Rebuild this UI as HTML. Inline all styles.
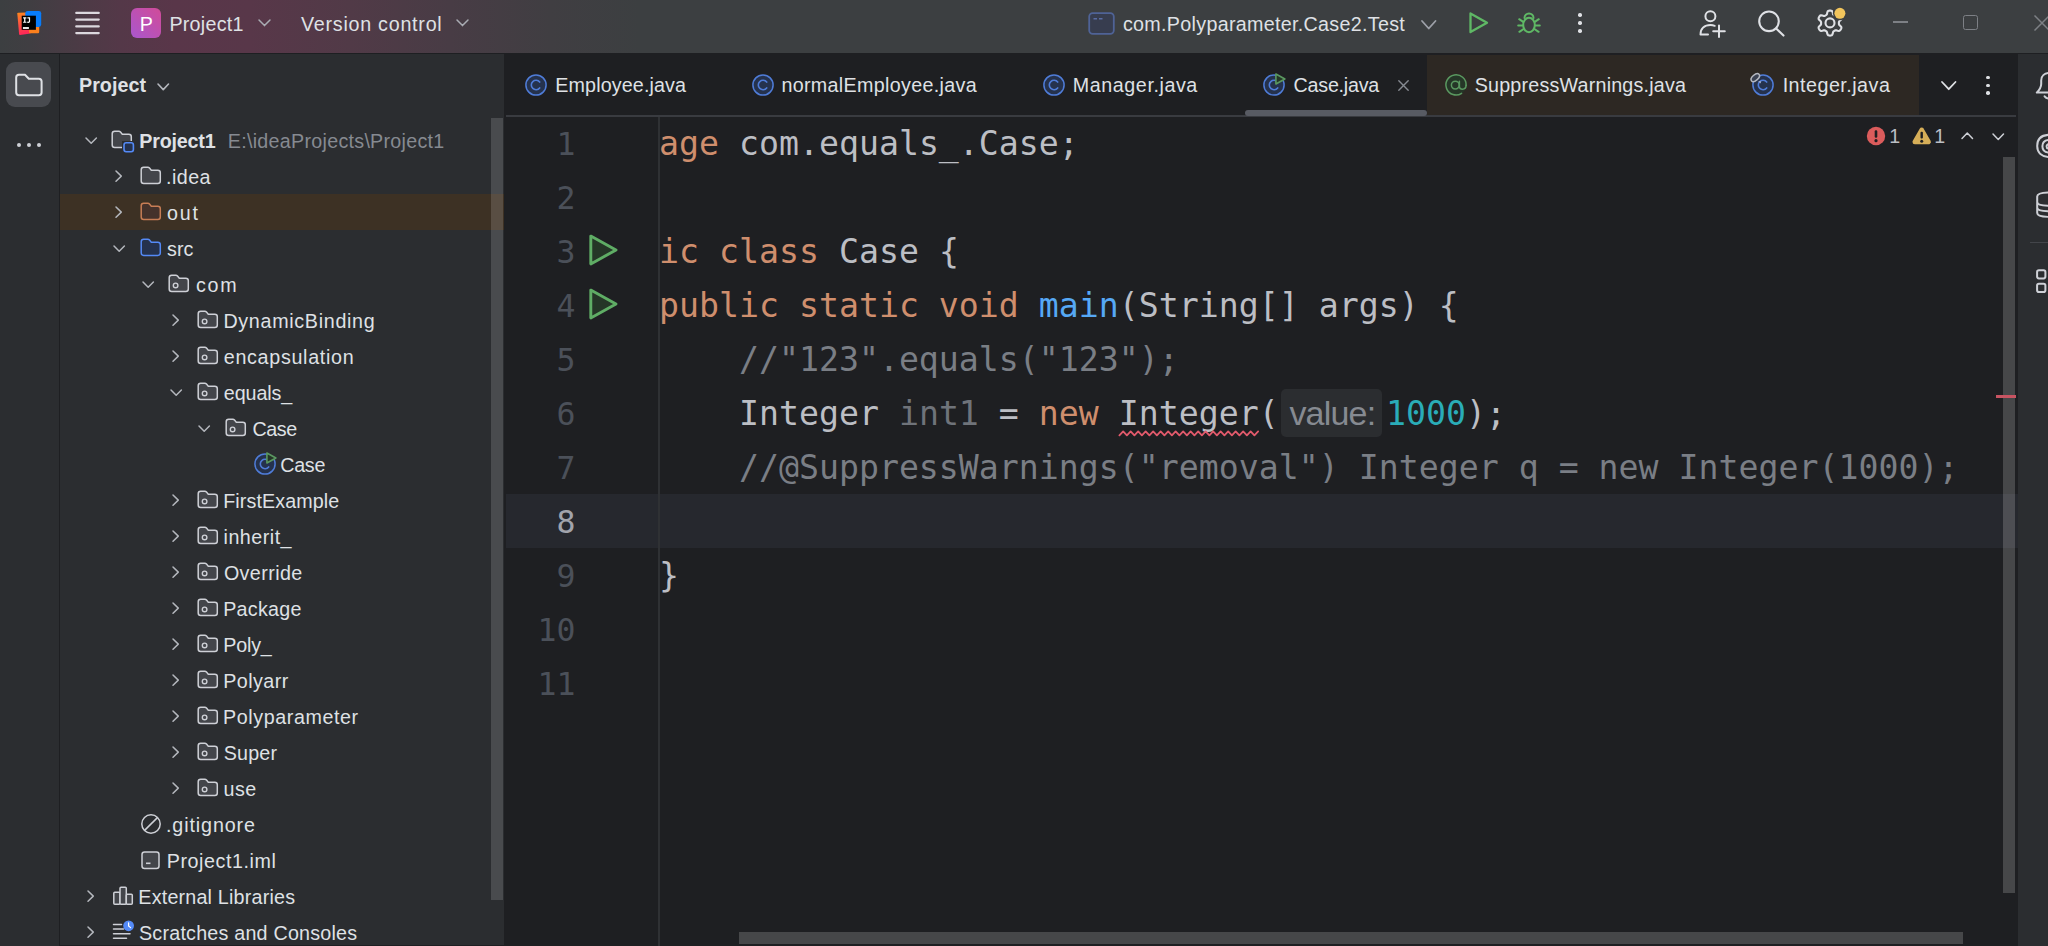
<!DOCTYPE html>
<html lang="en"><head><meta charset="utf-8"><title>Project1 - Case.java</title>
<style>
html,body{margin:0;padding:0;background:#1e1f22;}
body{width:2048px;height:946px;position:relative;overflow:hidden;font-family:"Liberation Sans","Noto Sans CJK SC",sans-serif;}
.t{position:absolute;white-space:pre;display:block;}
.s{font-family:"Liberation Sans","Noto Sans CJK SC",sans-serif;}
.m{font-family:"DejaVu Sans Mono","Liberation Mono",monospace;}
.i{position:absolute;display:block;overflow:visible;}
.b{position:absolute;}
</style></head><body>
<div class="b" style="left:0;top:0;width:2048px;height:53px;background:linear-gradient(90deg,#3c3f41 0px,#403e42 30px,#473c44 60px,#4e3a46 90px,#543848 120px,#593649 175px,#583749 250px,#513a47 350px,#483c45 450px,#403e42 550px,#3c3f41 640px);"></div>
<div class="b" style="left:0px;top:53px;width:2048px;height:1px;background:#1e1f22;"></div>
<svg class="i" style="left:17px;top:10px" width="26" height="27" viewBox="0 0 26 27" ><defs><linearGradient id="lgA" x1="0" y1="0" x2="0.150" y2="1"><stop offset="0" stop-color="#fc8a1c"/><stop offset="0.450" stop-color="#fd5a3c"/><stop offset="1" stop-color="#fe2857"/></linearGradient></defs>
<path d="M0.300 3.600 Q0.300 2.800 1.200 2.700 L9 2.400 L13.500 23.600 L3 25 Q2.200 25 2.100 24.200 Z" fill="url(#lgA)"/>
<rect x="12" y="13" width="10.200" height="10.200" rx="1.200" fill="#fc801d"/>
<rect x="8.300" y="0.900" width="15.900" height="16.100" rx="2.400" fill="#087cfa"/>
<rect x="4.700" y="5.700" width="14.200" height="14.100" fill="#000"/>
<rect x="5.900" y="17.100" width="6" height="1.800" fill="#fff"/>
<path d="M6.100 7.300h3.300v1.100h-1v3.300h1v1.100h-3.300v-1.100h1v-3.300h-1z M10.400 7.300h2.700v3.900c0 1.200-.7 1.700-1.700 1.700-.7 0-1.200-.3-1.600-.7l.8-.8c.2.200.4.400.7.400.4 0 .6-.2.600-.7v-2.700h-1.500z" fill="#fff"/></svg>
<svg class="i" style="left:73px;top:10px" width="30" height="26" viewBox="0 0 30 26" ><path d="M3.300 2.900 H25.700 M3.300 9.600 H25.700 M3.300 16.400 H25.700 M3.300 23.100 H25.700" stroke="#dcd8de" stroke-width="2.300" stroke-linecap="round" fill="none"/></svg>
<div class="b" style="left:131px;top:8px;width:30px;height:30px;border-radius:6px;background:linear-gradient(45deg,#a957cd 0%,#d14b98 100%);"></div>
<span class="t s" style="left:139.72px;top:4.97px;font-size:19.7px;line-height:39.4px;height:39.4px;color:#ffffff;letter-spacing:0.000px;">P</span>
<span class="t s" style="left:169.42px;top:4.97px;font-size:19.7px;line-height:39.4px;height:39.4px;color:#dfe1e5;letter-spacing:0.252px;">Project1</span>
<svg class="i" style="left:256.9px;top:18.4px" width="15" height="9.6" viewBox="0 0 15 9.6" ><path d="M2 2 L7.5 7.6 L13 2" fill="none" stroke="#a9acb3" stroke-width="1.5" stroke-linecap="round" stroke-linejoin="round"/></svg>
<span class="t s" style="left:301.00px;top:4.97px;font-size:19.7px;line-height:39.4px;height:39.4px;color:#dfe1e5;letter-spacing:0.748px;">Version control</span>
<svg class="i" style="left:454.9px;top:18.4px" width="15" height="9.6" viewBox="0 0 15 9.6" ><path d="M2 2 L7.5 7.6 L13 2" fill="none" stroke="#a9acb3" stroke-width="1.5" stroke-linecap="round" stroke-linejoin="round"/></svg>
<svg class="i" style="left:1088px;top:11.5px" width="27" height="23" viewBox="0 0 27 23" ><rect x="1.200" y="1.200" width="24.600" height="20.600" rx="3.500" fill="#373d4f" stroke="#4f6396" stroke-width="1.800"/><rect x="5.500" y="6" width="3.500" height="1.500" fill="#5a6da3"/><rect x="11" y="6" width="3.500" height="1.500" fill="#5a6da3"/></svg>
<span class="t s" style="left:1122.96px;top:4.97px;font-size:19.7px;line-height:39.4px;height:39.4px;color:#dfe1e5;letter-spacing:0.308px;">com.Polyparameter.Case2.Test</span>
<svg class="i" style="left:1419.85px;top:19.05px" width="17.5" height="11.5" viewBox="0 0 17.5 11.5" ><path d="M2 2 L8.75 9.5 L15.5 2" fill="none" stroke="#9da0a8" stroke-width="1.8" stroke-linecap="round" stroke-linejoin="round"/></svg>
<svg class="i" style="left:1467px;top:10.2px" width="24" height="26" viewBox="0 0 24 26" ><path d="M3.500 3.500 L20 12.800 L3.500 22.100 Z" fill="none" stroke="#5fb865" stroke-width="2.300" stroke-linejoin="round"/></svg>
<svg class="i" style="left:1516px;top:10px" width="26" height="26" viewBox="0 0 26 26" ><g fill="none" stroke="#5fb865" stroke-width="2" stroke-linecap="round">
<ellipse cx="13" cy="15" rx="5.800" ry="7.200"/>
<path d="M8.500 8 a4.500 4.500 0 0 1 9 0"/>
<path d="M7.200 11.800 L3.200 9.200 M18.800 11.800 L22.800 9.200 M7 15.500 H2.200 M19 15.500 H23.800 M7.600 19 L3.400 21.800 M18.400 19 L22.600 21.800"/></g></svg>
<div class="b" style="left:1578.3px;top:13.3px;width:3.4px;height:3.4px;border-radius:50%;background:#dfe1e5"></div>
<div class="b" style="left:1578.3px;top:21.400000000000002px;width:3.4px;height:3.4px;border-radius:50%;background:#dfe1e5"></div>
<div class="b" style="left:1578.3px;top:29.3px;width:3.4px;height:3.4px;border-radius:50%;background:#dfe1e5"></div>
<svg class="i" style="left:1697px;top:8px" width="30" height="31" viewBox="0 0 30 31" ><g fill="none" stroke="#dfe1e5" stroke-width="2" stroke-linecap="round">
<circle cx="13.400" cy="8.200" r="5"/><path d="M3.500 26.500 c0-6 4-9.500 10-9.500 c1.500 0 3 .3 4.200 .8 M3.500 26.500 H11"/>
<path d="M22 17.500 V29 M16.200 23.300 H27.800"/></g></svg>
<svg class="i" style="left:1756px;top:9px" width="30" height="30" viewBox="0 0 30 30" ><g fill="none" stroke="#dfe1e5" stroke-width="2.100" stroke-linecap="round"><circle cx="13" cy="12.300" r="9.800"/><path d="M20.200 19.500 L27.500 26.600"/></g></svg>
<svg class="i" style="left:1815.3px;top:8px" width="30" height="30" viewBox="0 0 30 30" ><g fill="none" stroke="#dfe1e5" stroke-width="2.100" stroke-linejoin="round"><path d="M15.00 2.60 L15.82 2.65 L16.61 2.85 L17.32 3.43 L17.77 4.76 L18.05 6.11 L18.46 6.75 L18.95 7.10 L19.45 7.39 L19.96 7.68 L20.50 7.93 L21.26 7.96 L22.57 7.53 L23.95 7.25 L24.80 7.58 L25.37 8.17 L25.83 8.85 L26.19 9.58 L26.42 10.37 L26.27 11.27 L25.34 12.33 L24.31 13.25 L23.96 13.92 L23.90 14.52 L23.90 15.10 L23.90 15.68 L23.96 16.28 L24.31 16.95 L25.34 17.87 L26.27 18.93 L26.42 19.83 L26.19 20.62 L25.83 21.35 L25.37 22.03 L24.80 22.62 L23.95 22.95 L22.57 22.67 L21.26 22.24 L20.50 22.27 L19.96 22.52 L19.45 22.81 L18.95 23.10 L18.46 23.45 L18.05 24.09 L17.77 25.44 L17.32 26.77 L16.61 27.35 L15.82 27.55 L15.00 27.60 L14.18 27.55 L13.39 27.35 L12.68 26.77 L12.23 25.44 L11.95 24.09 L11.54 23.45 L11.05 23.10 L10.55 22.81 L10.04 22.52 L9.50 22.27 L8.74 22.24 L7.43 22.67 L6.05 22.95 L5.20 22.62 L4.63 22.03 L4.17 21.35 L3.81 20.62 L3.58 19.83 L3.73 18.93 L4.66 17.87 L5.69 16.95 L6.04 16.28 L6.10 15.68 L6.10 15.10 L6.10 14.52 L6.04 13.92 L5.69 13.25 L4.66 12.33 L3.73 11.27 L3.58 10.37 L3.81 9.58 L4.17 8.85 L4.63 8.17 L5.20 7.58 L6.05 7.25 L7.43 7.53 L8.74 7.96 L9.50 7.93 L10.04 7.68 L10.55 7.39 L11.05 7.10 L11.54 6.75 L11.95 6.11 L12.23 4.76 L12.68 3.43 L13.39 2.85 L14.18 2.65 Z"/><circle cx="15" cy="14.900" r="4.500"/></g><circle cx="24.900" cy="5.300" r="7" fill="#3c3f41"/><circle cx="24.900" cy="5.300" r="5.500" fill="#f2c55c"/></svg>
<div class="b" style="left:1893px;top:21.2px;width:15px;height:1.5px;background:#7d8085;"></div>
<div class="b" style="left:1963px;top:15px;width:12.500px;height:12.500px;border:1.500px solid #7d8085;border-radius:2.500px"></div>
<svg class="i" style="left:2033px;top:14px" width="18" height="18" viewBox="0 0 18 18" ><path d="M1.500 1.500 L16.500 16.500 M16.500 1.500 L1.500 16.500" stroke="#7d8085" stroke-width="1.500" fill="none"/></svg>
<div class="b" style="left:0px;top:54px;width:60px;height:892px;background:#2b2d30;"></div>
<div class="b" style="left:59px;top:54px;width:1px;height:892px;background:#1e1f22;"></div>
<div class="b" style="left:6px;top:62px;width:45px;height:45px;border-radius:9px;background:#484a4f"></div>
<svg class="i" style="left:14px;top:72px" width="30" height="26" viewBox="0 0 30 26" ><path d="M2.200 5.500 Q2.200 2.800 5 2.800 H11 L14.800 6.800 H24.800 Q27.600 6.800 27.600 9.600 V20.600 Q27.600 23.300 24.800 23.300 H5 Q2.200 23.300 2.200 20.600 Z" fill="none" stroke="#dfe1e5" stroke-width="2" stroke-linejoin="round"/></svg>
<div class="b" style="left:16.7px;top:142.7px;width:4px;height:4px;border-radius:50%;background:#ced0d6"></div>
<div class="b" style="left:27px;top:142.7px;width:4px;height:4px;border-radius:50%;background:#ced0d6"></div>
<div class="b" style="left:37.2px;top:142.7px;width:4px;height:4px;border-radius:50%;background:#ced0d6"></div>
<div class="b" style="left:60px;top:54px;width:444px;height:892px;background:#2b2d30;"></div>
<span class="t s" style="left:79.02px;top:65.97px;font-size:19.7px;line-height:39.4px;height:39.4px;color:#dfe1e5;letter-spacing:0.032px;font-weight:700;">Project</span>
<svg class="i" style="left:155.75px;top:81.5px" width="14.5" height="9.6" viewBox="0 0 14.5 9.6" ><path d="M2 2 L7.25 7.6 L12.5 2" fill="none" stroke="#b4b7bd" stroke-width="1.6" stroke-linecap="round" stroke-linejoin="round"/></svg>
<div class="b" style="left:60px;top:194px;width:444px;height:36px;background:#3d3124;"></div>
<svg class="i" style="left:83.8px;top:135.65px" width="14.4" height="9.3" viewBox="0 0 14.4 9.3" ><path d="M2 2 L7.2 7.3 L12.4 2" fill="none" stroke="#b4b7bd" stroke-width="1.5" stroke-linecap="round" stroke-linejoin="round"/></svg>
<svg class="i" style="left:111.0px;top:130.4px" width="22" height="19" viewBox="0 0 22 19" ><path d="M1.200 3.800 Q1.200 1.300 3.700 1.300 H7.800 Q8.800 1.300 9.500 2.100 L11.300 4.200 H17.800 Q20.300 4.200 20.300 6.700 V14.900 Q20.300 17.400 17.800 17.400 H3.700 Q1.200 17.400 1.200 14.900 Z" fill="#43454a" stroke="#ced0d6" stroke-width="1.500" stroke-linejoin="round"/></svg>
<svg class="i" style="left:122.0px;top:141px" width="14" height="13" viewBox="0 0 14 13" ><rect x="0" y="0" width="13.500" height="12.500" fill="#2b2d30"/><rect x="2" y="1.800" width="9.400" height="9" rx="2.200" fill="#25324d" stroke="#548af7" stroke-width="1.600"/></svg>
<span class="t s" style="left:139.32px;top:121.97px;font-size:19.7px;line-height:39.4px;height:39.4px;color:#dfe1e5;letter-spacing:-0.192px;font-weight:700;">Project1</span>
<svg class="i" style="left:114.14999999999999px;top:169.1px" width="9.3" height="14.2" viewBox="0 0 9.3 14.2" ><path d="M2 2 L7.3 7.1 L2 12.2" fill="none" stroke="#b4b7bd" stroke-width="1.5" stroke-linecap="round" stroke-linejoin="round"/></svg>
<svg class="i" style="left:139.75px;top:166.4px" width="22" height="19" viewBox="0 0 22 19" ><path d="M1.200 3.800 Q1.200 1.300 3.700 1.300 H7.800 Q8.800 1.300 9.500 2.100 L11.300 4.200 H17.800 Q20.300 4.200 20.300 6.700 V14.900 Q20.300 17.400 17.800 17.400 H3.700 Q1.200 17.400 1.200 14.900 Z" fill="#43454a" stroke="#ced0d6" stroke-width="1.500" stroke-linejoin="round"/></svg>
<span class="t s" style="left:165.98px;top:157.97px;font-size:19.7px;line-height:39.4px;height:39.4px;color:#dfe1e5;letter-spacing:0.468px;">.idea</span>
<svg class="i" style="left:114.14999999999999px;top:205.1px" width="9.3" height="14.2" viewBox="0 0 9.3 14.2" ><path d="M2 2 L7.3 7.1 L2 12.2" fill="none" stroke="#b4b7bd" stroke-width="1.5" stroke-linecap="round" stroke-linejoin="round"/></svg>
<svg class="i" style="left:139.75px;top:202.4px" width="22" height="19" viewBox="0 0 22 19" ><path d="M1.200 3.800 Q1.200 1.300 3.700 1.300 H7.800 Q8.800 1.300 9.500 2.100 L11.300 4.200 H17.800 Q20.300 4.200 20.300 6.700 V14.900 Q20.300 17.400 17.800 17.400 H3.700 Q1.200 17.400 1.200 14.900 Z" fill="#45322b" stroke="#c77d55" stroke-width="1.500" stroke-linejoin="round"/></svg>
<span class="t s" style="left:166.96px;top:193.97px;font-size:19.7px;line-height:39.4px;height:39.4px;color:#dfe1e5;letter-spacing:1.877px;">out</span>
<svg class="i" style="left:111.8px;top:243.65px" width="14.4" height="9.3" viewBox="0 0 14.4 9.3" ><path d="M2 2 L7.2 7.3 L12.4 2" fill="none" stroke="#b4b7bd" stroke-width="1.5" stroke-linecap="round" stroke-linejoin="round"/></svg>
<svg class="i" style="left:139.75px;top:238.4px" width="22" height="19" viewBox="0 0 22 19" ><path d="M1.200 3.800 Q1.200 1.300 3.700 1.300 H7.800 Q8.800 1.300 9.500 2.100 L11.300 4.200 H17.800 Q20.300 4.200 20.300 6.700 V14.900 Q20.300 17.400 17.800 17.400 H3.700 Q1.200 17.400 1.200 14.900 Z" fill="#25324d" stroke="#548af7" stroke-width="1.500" stroke-linejoin="round"/></svg>
<span class="t s" style="left:167.01px;top:229.97px;font-size:19.7px;line-height:39.4px;height:39.4px;color:#dfe1e5;letter-spacing:0.093px;">src</span>
<svg class="i" style="left:140.8px;top:279.65000000000003px" width="14.4" height="9.3" viewBox="0 0 14.4 9.3" ><path d="M2 2 L7.2 7.3 L12.4 2" fill="none" stroke="#b4b7bd" stroke-width="1.5" stroke-linecap="round" stroke-linejoin="round"/></svg>
<svg class="i" style="left:168.0px;top:274.4px" width="22" height="19" viewBox="0 0 22 19" ><path d="M1.200 3.800 Q1.200 1.300 3.700 1.300 H7.800 Q8.800 1.300 9.500 2.100 L11.300 4.200 H17.800 Q20.300 4.200 20.300 6.700 V14.900 Q20.300 17.400 17.800 17.400 H3.700 Q1.200 17.400 1.200 14.900 Z" fill="#43454a" stroke="#ced0d6" stroke-width="1.500" stroke-linejoin="round"/><circle cx="7.600" cy="11.400" r="2.300" fill="none" stroke="#ced0d6" stroke-width="1.400"/></svg>
<span class="t s" style="left:196.11px;top:265.97px;font-size:19.7px;line-height:39.4px;height:39.4px;color:#dfe1e5;letter-spacing:1.668px;">com</span>
<svg class="i" style="left:171.14999999999998px;top:313.09999999999997px" width="9.3" height="14.2" viewBox="0 0 9.3 14.2" ><path d="M2 2 L7.3 7.1 L2 12.2" fill="none" stroke="#b4b7bd" stroke-width="1.5" stroke-linecap="round" stroke-linejoin="round"/></svg>
<svg class="i" style="left:196.75px;top:310.4px" width="22" height="19" viewBox="0 0 22 19" ><path d="M1.200 3.800 Q1.200 1.300 3.700 1.300 H7.800 Q8.800 1.300 9.500 2.100 L11.300 4.200 H17.800 Q20.300 4.200 20.300 6.700 V14.900 Q20.300 17.400 17.800 17.400 H3.700 Q1.200 17.400 1.200 14.900 Z" fill="#43454a" stroke="#ced0d6" stroke-width="1.500" stroke-linejoin="round"/><circle cx="7.600" cy="11.400" r="2.300" fill="none" stroke="#ced0d6" stroke-width="1.400"/></svg>
<span class="t s" style="left:223.42px;top:301.97px;font-size:19.7px;line-height:39.4px;height:39.4px;color:#dfe1e5;letter-spacing:0.694px;">DynamicBinding</span>
<svg class="i" style="left:171.14999999999998px;top:349.09999999999997px" width="9.3" height="14.2" viewBox="0 0 9.3 14.2" ><path d="M2 2 L7.3 7.1 L2 12.2" fill="none" stroke="#b4b7bd" stroke-width="1.5" stroke-linecap="round" stroke-linejoin="round"/></svg>
<svg class="i" style="left:196.75px;top:346.4px" width="22" height="19" viewBox="0 0 22 19" ><path d="M1.200 3.800 Q1.200 1.300 3.700 1.300 H7.800 Q8.800 1.300 9.500 2.100 L11.300 4.200 H17.800 Q20.300 4.200 20.300 6.700 V14.900 Q20.300 17.400 17.800 17.400 H3.700 Q1.200 17.400 1.200 14.900 Z" fill="#43454a" stroke="#ced0d6" stroke-width="1.500" stroke-linejoin="round"/><circle cx="7.600" cy="11.400" r="2.300" fill="none" stroke="#ced0d6" stroke-width="1.400"/></svg>
<span class="t s" style="left:223.81px;top:337.97px;font-size:19.7px;line-height:39.4px;height:39.4px;color:#dfe1e5;letter-spacing:0.693px;">encapsulation</span>
<svg class="i" style="left:168.8px;top:387.65000000000003px" width="14.4" height="9.3" viewBox="0 0 14.4 9.3" ><path d="M2 2 L7.2 7.3 L12.4 2" fill="none" stroke="#b4b7bd" stroke-width="1.5" stroke-linecap="round" stroke-linejoin="round"/></svg>
<svg class="i" style="left:196.75px;top:382.4px" width="22" height="19" viewBox="0 0 22 19" ><path d="M1.200 3.800 Q1.200 1.300 3.700 1.300 H7.800 Q8.800 1.300 9.500 2.100 L11.300 4.200 H17.800 Q20.300 4.200 20.300 6.700 V14.900 Q20.300 17.400 17.800 17.400 H3.700 Q1.200 17.400 1.200 14.900 Z" fill="#43454a" stroke="#ced0d6" stroke-width="1.500" stroke-linejoin="round"/><circle cx="7.600" cy="11.400" r="2.300" fill="none" stroke="#ced0d6" stroke-width="1.400"/></svg>
<span class="t s" style="left:223.81px;top:373.97px;font-size:19.7px;line-height:39.4px;height:39.4px;color:#dfe1e5;letter-spacing:-0.076px;">equals_</span>
<svg class="i" style="left:197.3px;top:423.65000000000003px" width="14.4" height="9.3" viewBox="0 0 14.4 9.3" ><path d="M2 2 L7.2 7.3 L12.4 2" fill="none" stroke="#b4b7bd" stroke-width="1.5" stroke-linecap="round" stroke-linejoin="round"/></svg>
<svg class="i" style="left:225.0px;top:418.4px" width="22" height="19" viewBox="0 0 22 19" ><path d="M1.200 3.800 Q1.200 1.300 3.700 1.300 H7.800 Q8.800 1.300 9.500 2.100 L11.300 4.200 H17.800 Q20.300 4.200 20.300 6.700 V14.900 Q20.300 17.400 17.800 17.400 H3.700 Q1.200 17.400 1.200 14.900 Z" fill="#43454a" stroke="#ced0d6" stroke-width="1.500" stroke-linejoin="round"/><circle cx="7.600" cy="11.400" r="2.300" fill="none" stroke="#ced0d6" stroke-width="1.400"/></svg>
<span class="t s" style="left:252.51px;top:409.97px;font-size:19.7px;line-height:39.4px;height:39.4px;color:#dfe1e5;letter-spacing:-0.409px;">Case</span>
<svg class="i" style="left:250.0px;top:449.1px" width="30" height="30" viewBox="0 0 30 30" ><circle cx="15" cy="15" r="10.100" fill="#25324d" stroke="#4f7cd8" stroke-width="1.500"/><path d="M18.700 12.100 A4.700 4.700 0 1 0 18.700 17.900" fill="none" stroke="#4f7cd8" stroke-width="1.600" stroke-linecap="round"/><path d="M16.900 4 L16.900 14 L25.900 9 Z" fill="#253627" stroke="#5a9860" stroke-width="1.600" stroke-linejoin="round"/></svg>
<span class="t s" style="left:280.21px;top:445.97px;font-size:19.7px;line-height:39.4px;height:39.4px;color:#dfe1e5;letter-spacing:-0.275px;">Case</span>
<svg class="i" style="left:171.14999999999998px;top:493.09999999999997px" width="9.3" height="14.2" viewBox="0 0 9.3 14.2" ><path d="M2 2 L7.3 7.1 L2 12.2" fill="none" stroke="#b4b7bd" stroke-width="1.5" stroke-linecap="round" stroke-linejoin="round"/></svg>
<svg class="i" style="left:196.75px;top:490.4px" width="22" height="19" viewBox="0 0 22 19" ><path d="M1.200 3.800 Q1.200 1.300 3.700 1.300 H7.800 Q8.800 1.300 9.500 2.100 L11.300 4.200 H17.800 Q20.300 4.200 20.300 6.700 V14.900 Q20.300 17.400 17.800 17.400 H3.700 Q1.200 17.400 1.200 14.900 Z" fill="#43454a" stroke="#ced0d6" stroke-width="1.500" stroke-linejoin="round"/><circle cx="7.600" cy="11.400" r="2.300" fill="none" stroke="#ced0d6" stroke-width="1.400"/></svg>
<span class="t s" style="left:223.22px;top:481.97px;font-size:19.7px;line-height:39.4px;height:39.4px;color:#dfe1e5;letter-spacing:0.110px;">FirstExample</span>
<svg class="i" style="left:171.14999999999998px;top:529.1px" width="9.3" height="14.2" viewBox="0 0 9.3 14.2" ><path d="M2 2 L7.3 7.1 L2 12.2" fill="none" stroke="#b4b7bd" stroke-width="1.5" stroke-linecap="round" stroke-linejoin="round"/></svg>
<svg class="i" style="left:196.75px;top:526.4px" width="22" height="19" viewBox="0 0 22 19" ><path d="M1.200 3.800 Q1.200 1.300 3.700 1.300 H7.800 Q8.800 1.300 9.500 2.100 L11.300 4.200 H17.800 Q20.300 4.200 20.300 6.700 V14.900 Q20.300 17.400 17.800 17.400 H3.700 Q1.200 17.400 1.200 14.900 Z" fill="#43454a" stroke="#ced0d6" stroke-width="1.500" stroke-linejoin="round"/><circle cx="7.600" cy="11.400" r="2.300" fill="none" stroke="#ced0d6" stroke-width="1.400"/></svg>
<span class="t s" style="left:223.52px;top:517.97px;font-size:19.7px;line-height:39.4px;height:39.4px;color:#dfe1e5;letter-spacing:0.496px;">inherit_</span>
<svg class="i" style="left:171.14999999999998px;top:565.1px" width="9.3" height="14.2" viewBox="0 0 9.3 14.2" ><path d="M2 2 L7.3 7.1 L2 12.2" fill="none" stroke="#b4b7bd" stroke-width="1.5" stroke-linecap="round" stroke-linejoin="round"/></svg>
<svg class="i" style="left:196.75px;top:562.4px" width="22" height="19" viewBox="0 0 22 19" ><path d="M1.200 3.800 Q1.200 1.300 3.700 1.300 H7.800 Q8.800 1.300 9.500 2.100 L11.300 4.200 H17.800 Q20.300 4.200 20.300 6.700 V14.900 Q20.300 17.400 17.800 17.400 H3.700 Q1.200 17.400 1.200 14.900 Z" fill="#43454a" stroke="#ced0d6" stroke-width="1.500" stroke-linejoin="round"/><circle cx="7.600" cy="11.400" r="2.300" fill="none" stroke="#ced0d6" stroke-width="1.400"/></svg>
<span class="t s" style="left:223.91px;top:553.97px;font-size:19.7px;line-height:39.4px;height:39.4px;color:#dfe1e5;letter-spacing:0.404px;">Override</span>
<svg class="i" style="left:171.14999999999998px;top:601.1px" width="9.3" height="14.2" viewBox="0 0 9.3 14.2" ><path d="M2 2 L7.3 7.1 L2 12.2" fill="none" stroke="#b4b7bd" stroke-width="1.5" stroke-linecap="round" stroke-linejoin="round"/></svg>
<svg class="i" style="left:196.75px;top:598.4px" width="22" height="19" viewBox="0 0 22 19" ><path d="M1.200 3.800 Q1.200 1.300 3.700 1.300 H7.800 Q8.800 1.300 9.500 2.100 L11.300 4.200 H17.800 Q20.300 4.200 20.300 6.700 V14.900 Q20.300 17.400 17.800 17.400 H3.700 Q1.200 17.400 1.200 14.900 Z" fill="#43454a" stroke="#ced0d6" stroke-width="1.500" stroke-linejoin="round"/><circle cx="7.600" cy="11.400" r="2.300" fill="none" stroke="#ced0d6" stroke-width="1.400"/></svg>
<span class="t s" style="left:223.22px;top:589.97px;font-size:19.7px;line-height:39.4px;height:39.4px;color:#dfe1e5;letter-spacing:0.272px;">Package</span>
<svg class="i" style="left:171.14999999999998px;top:637.1px" width="9.3" height="14.2" viewBox="0 0 9.3 14.2" ><path d="M2 2 L7.3 7.1 L2 12.2" fill="none" stroke="#b4b7bd" stroke-width="1.5" stroke-linecap="round" stroke-linejoin="round"/></svg>
<svg class="i" style="left:196.75px;top:634.4px" width="22" height="19" viewBox="0 0 22 19" ><path d="M1.200 3.800 Q1.200 1.300 3.700 1.300 H7.800 Q8.800 1.300 9.500 2.100 L11.300 4.200 H17.800 Q20.300 4.200 20.300 6.700 V14.900 Q20.300 17.400 17.800 17.400 H3.700 Q1.200 17.400 1.200 14.900 Z" fill="#43454a" stroke="#ced0d6" stroke-width="1.500" stroke-linejoin="round"/><circle cx="7.600" cy="11.400" r="2.300" fill="none" stroke="#ced0d6" stroke-width="1.400"/></svg>
<span class="t s" style="left:223.22px;top:625.97px;font-size:19.7px;line-height:39.4px;height:39.4px;color:#dfe1e5;letter-spacing:-0.167px;">Poly_</span>
<svg class="i" style="left:171.14999999999998px;top:673.1px" width="9.3" height="14.2" viewBox="0 0 9.3 14.2" ><path d="M2 2 L7.3 7.1 L2 12.2" fill="none" stroke="#b4b7bd" stroke-width="1.5" stroke-linecap="round" stroke-linejoin="round"/></svg>
<svg class="i" style="left:196.75px;top:670.4px" width="22" height="19" viewBox="0 0 22 19" ><path d="M1.200 3.800 Q1.200 1.300 3.700 1.300 H7.800 Q8.800 1.300 9.500 2.100 L11.300 4.200 H17.800 Q20.300 4.200 20.300 6.700 V14.900 Q20.300 17.400 17.800 17.400 H3.700 Q1.200 17.400 1.200 14.900 Z" fill="#43454a" stroke="#ced0d6" stroke-width="1.500" stroke-linejoin="round"/><circle cx="7.600" cy="11.400" r="2.300" fill="none" stroke="#ced0d6" stroke-width="1.400"/></svg>
<span class="t s" style="left:223.22px;top:661.97px;font-size:19.7px;line-height:39.4px;height:39.4px;color:#dfe1e5;letter-spacing:0.437px;">Polyarr</span>
<svg class="i" style="left:171.14999999999998px;top:709.1px" width="9.3" height="14.2" viewBox="0 0 9.3 14.2" ><path d="M2 2 L7.3 7.1 L2 12.2" fill="none" stroke="#b4b7bd" stroke-width="1.5" stroke-linecap="round" stroke-linejoin="round"/></svg>
<svg class="i" style="left:196.75px;top:706.4px" width="22" height="19" viewBox="0 0 22 19" ><path d="M1.200 3.800 Q1.200 1.300 3.700 1.300 H7.800 Q8.800 1.300 9.500 2.100 L11.300 4.200 H17.800 Q20.300 4.200 20.300 6.700 V14.900 Q20.300 17.400 17.800 17.400 H3.700 Q1.200 17.400 1.200 14.900 Z" fill="#43454a" stroke="#ced0d6" stroke-width="1.500" stroke-linejoin="round"/><circle cx="7.600" cy="11.400" r="2.300" fill="none" stroke="#ced0d6" stroke-width="1.400"/></svg>
<span class="t s" style="left:223.02px;top:697.97px;font-size:19.7px;line-height:39.4px;height:39.4px;color:#dfe1e5;letter-spacing:0.594px;">Polyparameter</span>
<svg class="i" style="left:171.14999999999998px;top:745.1px" width="9.3" height="14.2" viewBox="0 0 9.3 14.2" ><path d="M2 2 L7.3 7.1 L2 12.2" fill="none" stroke="#b4b7bd" stroke-width="1.5" stroke-linecap="round" stroke-linejoin="round"/></svg>
<svg class="i" style="left:196.75px;top:742.4px" width="22" height="19" viewBox="0 0 22 19" ><path d="M1.200 3.800 Q1.200 1.300 3.700 1.300 H7.800 Q8.800 1.300 9.500 2.100 L11.300 4.200 H17.800 Q20.300 4.200 20.300 6.700 V14.900 Q20.300 17.400 17.800 17.400 H3.700 Q1.200 17.400 1.200 14.900 Z" fill="#43454a" stroke="#ced0d6" stroke-width="1.500" stroke-linejoin="round"/><circle cx="7.600" cy="11.400" r="2.300" fill="none" stroke="#ced0d6" stroke-width="1.400"/></svg>
<span class="t s" style="left:223.71px;top:733.97px;font-size:19.7px;line-height:39.4px;height:39.4px;color:#dfe1e5;letter-spacing:0.196px;">Super</span>
<svg class="i" style="left:171.14999999999998px;top:781.1px" width="9.3" height="14.2" viewBox="0 0 9.3 14.2" ><path d="M2 2 L7.3 7.1 L2 12.2" fill="none" stroke="#b4b7bd" stroke-width="1.5" stroke-linecap="round" stroke-linejoin="round"/></svg>
<svg class="i" style="left:196.75px;top:778.4px" width="22" height="19" viewBox="0 0 22 19" ><path d="M1.200 3.800 Q1.200 1.300 3.700 1.300 H7.800 Q8.800 1.300 9.500 2.100 L11.300 4.200 H17.800 Q20.300 4.200 20.300 6.700 V14.900 Q20.300 17.400 17.800 17.400 H3.700 Q1.200 17.400 1.200 14.900 Z" fill="#43454a" stroke="#ced0d6" stroke-width="1.500" stroke-linejoin="round"/><circle cx="7.600" cy="11.400" r="2.300" fill="none" stroke="#ced0d6" stroke-width="1.400"/></svg>
<span class="t s" style="left:223.42px;top:769.97px;font-size:19.7px;line-height:39.4px;height:39.4px;color:#dfe1e5;letter-spacing:0.527px;">use</span>
<svg class="i" style="left:139.5px;top:813px" width="22" height="22" viewBox="0 0 22 22" ><circle cx="11" cy="11" r="9.200" fill="none" stroke="#ced0d6" stroke-width="1.500"/><path d="M4.600 17.400 L17.400 4.600" stroke="#ced0d6" stroke-width="1.500"/></svg>
<span class="t s" style="left:165.93px;top:805.97px;font-size:19.7px;line-height:39.4px;height:39.4px;color:#dfe1e5;letter-spacing:0.900px;">.gitignore</span>
<svg class="i" style="left:141px;top:850.5px" width="20" height="19" viewBox="0 0 20 19" ><rect x="1" y="1" width="17" height="16.500" rx="2.500" fill="#43454a" stroke="#ced0d6" stroke-width="1.500"/><rect x="5" y="11.500" width="4.500" height="1.600" fill="#ced0d6"/></svg>
<span class="t s" style="left:166.72px;top:841.97px;font-size:19.7px;line-height:39.4px;height:39.4px;color:#dfe1e5;letter-spacing:0.566px;">Project1.iml</span>
<svg class="i" style="left:85.85px;top:889.1px" width="9.3" height="14.2" viewBox="0 0 9.3 14.2" ><path d="M2 2 L7.3 7.1 L2 12.2" fill="none" stroke="#b4b7bd" stroke-width="1.5" stroke-linecap="round" stroke-linejoin="round"/></svg>
<svg class="i" style="left:112.8px;top:886px" width="22" height="20" viewBox="0 0 22 20" ><g fill="#43454a" stroke="#ced0d6" stroke-width="1.500" stroke-linejoin="round"><rect x="0.800" y="6.300" width="6.200" height="12" rx="1"/><rect x="7" y="1.300" width="6.300" height="17" rx="1"/><rect x="13.300" y="8.300" width="6" height="10" rx="1"/></g></svg>
<span class="t s" style="left:138.32px;top:877.97px;font-size:19.7px;line-height:39.4px;height:39.4px;color:#dfe1e5;letter-spacing:0.206px;">External Libraries</span>
<svg class="i" style="left:85.85px;top:925.1px" width="9.3" height="14.2" viewBox="0 0 9.3 14.2" ><path d="M2 2 L7.3 7.1 L2 12.2" fill="none" stroke="#b4b7bd" stroke-width="1.5" stroke-linecap="round" stroke-linejoin="round"/></svg>
<svg class="i" style="left:112.3px;top:920px" width="24" height="24" viewBox="0 0 24 24" ><g stroke="#ced0d6" stroke-width="1.500" stroke-linecap="round"><path d="M1.500 4.500 H9.500 M1.500 9.100 H11.500 M1.500 13.700 H18 M1.500 18.300 H14.500"/></g><circle cx="16.600" cy="5.800" r="5.400" fill="#548af7"/><path d="M16.600 2.800 V6 L18.600 7.600" stroke="#fff" stroke-width="1.200" fill="none" stroke-linecap="round"/></svg>
<span class="t s" style="left:139.01px;top:913.97px;font-size:19.7px;line-height:39.4px;height:39.4px;color:#dfe1e5;letter-spacing:0.225px;">Scratches and Consoles</span>
<span class="t s" style="left:227.82px;top:121.97px;font-size:19.7px;line-height:39.4px;height:39.4px;color:#868a91;letter-spacing:0.277px;">E:\ideaProjects\Project1</span>
<div class="b" style="left:491px;top:118px;width:12px;height:782px;background:rgba(255,255,255,0.145);"></div>
<div class="b" style="left:59px;top:945px;width:445px;height:1px;background:#1e1f22;"></div>
<div class="b" style="left:504px;top:54px;width:1514px;height:892px;background:#1e1f22;"></div>
<div class="b" style="left:1427px;top:55px;width:492px;height:60px;background:#2d2823;"></div>
<div class="b" style="left:506px;top:115px;width:1510px;height:1.5px;background:#393b40;"></div>
<div class="b" style="left:1244.500px;top:110px;width:182.500px;height:5.500px;border-radius:3px;background:#585b63"></div>
<svg class="i" style="left:521.15px;top:70px" width="30" height="30" viewBox="0 0 30 30" ><circle cx="15" cy="15" r="10.100" fill="#25324d" stroke="#4f7cd8" stroke-width="1.500"/><path d="M18.700 12.100 A4.700 4.700 0 1 0 18.700 17.900" fill="none" stroke="#4f7cd8" stroke-width="1.600" stroke-linecap="round"/></svg>
<span class="t s" style="left:555.32px;top:65.97px;font-size:19.7px;line-height:39.4px;height:39.4px;color:#dfe1e5;letter-spacing:0.133px;">Employee.java</span>
<svg class="i" style="left:747.8px;top:70px" width="30" height="30" viewBox="0 0 30 30" ><circle cx="15" cy="15" r="10.100" fill="#25324d" stroke="#4f7cd8" stroke-width="1.500"/><path d="M18.700 12.100 A4.700 4.700 0 1 0 18.700 17.900" fill="none" stroke="#4f7cd8" stroke-width="1.600" stroke-linecap="round"/></svg>
<span class="t s" style="left:781.42px;top:65.97px;font-size:19.7px;line-height:39.4px;height:39.4px;color:#dfe1e5;letter-spacing:0.331px;">normalEmployee.java</span>
<svg class="i" style="left:1039px;top:70px" width="30" height="30" viewBox="0 0 30 30" ><circle cx="15" cy="15" r="10.100" fill="#25324d" stroke="#4f7cd8" stroke-width="1.500"/><path d="M18.700 12.100 A4.700 4.700 0 1 0 18.700 17.900" fill="none" stroke="#4f7cd8" stroke-width="1.600" stroke-linecap="round"/></svg>
<span class="t s" style="left:1072.82px;top:65.97px;font-size:19.7px;line-height:39.4px;height:39.4px;color:#dfe1e5;letter-spacing:0.571px;">Manager.java</span>
<svg class="i" style="left:1259.1px;top:70px" width="30" height="30" viewBox="0 0 30 30" ><circle cx="15" cy="15" r="10.100" fill="#25324d" stroke="#4f7cd8" stroke-width="1.500"/><path d="M18.700 12.100 A4.700 4.700 0 1 0 18.700 17.900" fill="none" stroke="#4f7cd8" stroke-width="1.600" stroke-linecap="round"/><path d="M16.900 4 L16.900 14 L25.900 9 Z" fill="#253627" stroke="#5a9860" stroke-width="1.600" stroke-linejoin="round"/></svg>
<span class="t s" style="left:1293.62px;top:65.97px;font-size:19.7px;line-height:39.4px;height:39.4px;color:#dfe1e5;letter-spacing:-0.247px;">Case.java</span>
<svg class="i" style="left:1397.6px;top:79.8px" width="11" height="11" viewBox="0 0 11 11" ><path d="M0.800 0.800 L10.200 10.200 M10.200 0.800 L0.800 10.200" stroke="#868a91" stroke-width="1.400" fill="none" stroke-linecap="round"/></svg>
<svg class="i" style="left:1445.4px;top:74px" width="23" height="23" viewBox="0 0 23 23" ><circle cx="11" cy="10.900" r="10.300" fill="#253627"/><g fill="none" stroke="#5a9860" stroke-width="1.500" stroke-linecap="round"><path d="M21.100 11.300 A10.100 10.100 0 1 0 16.600 19.300"/><circle cx="10.300" cy="11.100" r="3.900"/><path d="M14.400 7.200 V12.600 Q14.400 15.300 17.400 15.300 Q21.100 15.100 21.100 11.300"/></g></svg>
<span class="t s" style="left:1474.71px;top:65.97px;font-size:19.7px;line-height:39.4px;height:39.4px;color:#dfe1e5;letter-spacing:0.205px;">SuppressWarnings.java</span>
<svg class="i" style="left:1748.1px;top:69.9px" width="30" height="30" viewBox="0 0 30 30" ><circle cx="15" cy="15" r="10.100" fill="#25324d" stroke="#4f7cd8" stroke-width="1.500"/><path d="M18.700 12.100 A4.700 4.700 0 1 0 18.700 17.900" fill="none" stroke="#4f7cd8" stroke-width="1.600" stroke-linecap="round"/><ellipse cx="7.300" cy="7.600" rx="5" ry="2.800" transform="rotate(-42 7.300 7.600)" fill="#3b4252" stroke="#b4b8c0" stroke-width="1.500"/><path d="M10.200 11 L13.200 11.600 L12.400 13.600 Z" fill="#aeb6cc"/></svg>
<span class="t s" style="left:1782.63px;top:65.97px;font-size:19.7px;line-height:39.4px;height:39.4px;color:#dfe1e5;letter-spacing:0.493px;">Integer.java</span>
<svg class="i" style="left:1940.25px;top:79.7px" width="17.5" height="11.2" viewBox="0 0 17.5 11.2" ><path d="M2 2 L8.75 9.2 L15.5 2" fill="none" stroke="#dfe1e5" stroke-width="1.8" stroke-linecap="round" stroke-linejoin="round"/></svg>
<div class="b" style="left:1986.3px;top:76.05px;width:3.4px;height:3.4px;border-radius:50%;background:#dfe1e5"></div>
<div class="b" style="left:1986.3px;top:83.7px;width:3.4px;height:3.4px;border-radius:50%;background:#dfe1e5"></div>
<div class="b" style="left:1986.3px;top:91.2px;width:3.4px;height:3.4px;border-radius:50%;background:#dfe1e5"></div>
<div class="b" style="left:506px;top:494px;width:1512px;height:54px;background:#26282e;"></div>
<div class="b" style="left:658px;top:117px;width:2px;height:829px;background:#2f3134;"></div>
<span class="t m" style="left:375.50px;width:200px;text-align:right;top:113.10px;font-size:31.5px;line-height:63px;height:63px;color:#4b5059">1</span>
<span class="t m" style="left:375.50px;width:200px;text-align:right;top:167.10px;font-size:31.5px;line-height:63px;height:63px;color:#4b5059">2</span>
<span class="t m" style="left:375.50px;width:200px;text-align:right;top:221.10px;font-size:31.5px;line-height:63px;height:63px;color:#4b5059">3</span>
<span class="t m" style="left:375.50px;width:200px;text-align:right;top:275.10px;font-size:31.5px;line-height:63px;height:63px;color:#4b5059">4</span>
<span class="t m" style="left:375.50px;width:200px;text-align:right;top:329.10px;font-size:31.5px;line-height:63px;height:63px;color:#4b5059">5</span>
<span class="t m" style="left:375.50px;width:200px;text-align:right;top:383.10px;font-size:31.5px;line-height:63px;height:63px;color:#4b5059">6</span>
<span class="t m" style="left:375.50px;width:200px;text-align:right;top:437.10px;font-size:31.5px;line-height:63px;height:63px;color:#4b5059">7</span>
<span class="t m" style="left:375.50px;width:200px;text-align:right;top:491.10px;font-size:31.5px;line-height:63px;height:63px;color:#a1a3ab">8</span>
<span class="t m" style="left:375.50px;width:200px;text-align:right;top:545.10px;font-size:31.5px;line-height:63px;height:63px;color:#4b5059">9</span>
<span class="t m" style="left:375.50px;width:200px;text-align:right;top:599.10px;font-size:31.5px;line-height:63px;height:63px;color:#4b5059">10</span>
<span class="t m" style="left:375.50px;width:200px;text-align:right;top:653.10px;font-size:31.5px;line-height:63px;height:63px;color:#4b5059">11</span>
<svg class="i" style="left:586px;top:232.3px" width="36" height="36" viewBox="0 0 36 36" ><path d="M4.800 4.100 L30 18 L4.800 31.900 Z" fill="#253627" stroke="#5fad65" stroke-width="2.900" stroke-linejoin="round"/></svg>
<svg class="i" style="left:586px;top:286.3px" width="36" height="36" viewBox="0 0 36 36" ><path d="M4.800 4.100 L30 18 L4.800 31.900 Z" fill="#253627" stroke="#5fad65" stroke-width="2.900" stroke-linejoin="round"/></svg>
<div class="b" style="left:659.500px;top:117px;width:1343px;height:814px;overflow:hidden"><div style="position:absolute;left:-659.500px;top:-117px;width:2048px;height:946px">
<div class="t m" style="left:579.0px;top:110.81px;font-size:33.2px;line-height:66.4px;height:66.4px;letter-spacing:0.012px;color:#bcbec4"><span style="color:#cf8e6d">package</span><span style="color:#bcbec4"> com.equals_.Case;</span></div>
<div class="t m" style="left:579.0px;top:218.81px;font-size:33.2px;line-height:66.4px;height:66.4px;letter-spacing:0.012px;color:#bcbec4"><span style="color:#cf8e6d">public class</span><span style="color:#bcbec4"> Case {</span></div>
<div class="t m" style="left:579.0px;top:272.81px;font-size:33.2px;line-height:66.4px;height:66.4px;letter-spacing:0.012px;color:#bcbec4"><span style="color:#cf8e6d">    public static void</span><span style="color:#bcbec4"> </span><span style="color:#56a8f5">main</span><span style="color:#bcbec4">(String[] args) {</span></div>
<div class="t m" style="left:579.0px;top:326.81px;font-size:33.2px;line-height:66.4px;height:66.4px;letter-spacing:0.012px;color:#bcbec4"><span style="color:#7a7e85">        //&quot;123&quot;.equals(&quot;123&quot;);</span></div>
<div class="t m" style="left:579.0px;top:380.81px;font-size:33.2px;line-height:66.4px;height:66.4px;letter-spacing:0.012px;color:#bcbec4"><span style="color:#bcbec4">        Integer </span><span style="color:#6f737a">int1</span><span style="color:#bcbec4"> = </span><span style="color:#cf8e6d">new</span><span style="color:#bcbec4"> </span><span style="color:#bcbec4">Integer</span><span style="color:#bcbec4">(</span></div>
<div class="t m" style="left:579.0px;top:434.81px;font-size:33.2px;line-height:66.4px;height:66.4px;letter-spacing:0.012px;color:#bcbec4"><span style="color:#7a7e85">        //@SuppressWarnings(&quot;removal&quot;) Integer q = new Integer(1000);</span></div>
<div class="t m" style="left:579.0px;top:542.81px;font-size:33.2px;line-height:66.4px;height:66.4px;letter-spacing:0.012px;color:#bcbec4"><span style="color:#bcbec4">    }</span></div>
<div class="t m" style="left:579.0px;top:596.81px;font-size:33.2px;line-height:66.4px;height:66.4px;letter-spacing:0.012px;color:#bcbec4"><span style="color:#bcbec4">}</span></div>
</div></div>
<div class="b" style="left:1281px;top:389px;width:100.500px;height:48px;border-radius:5px;background:#2b2d30"></div>
<span class="t s" style="left:1289.40px;top:378.72px;font-size:34px;line-height:68px;height:68px;color:#868a91;letter-spacing:-0.804px;">value:</span>
<svg class="i" style="left:0px;top:0px" width="2048" height="946" viewBox="0 0 2048 946" ><polyline points="1119.40,435.4 1123.15,431.4 1126.90,435.4 1130.65,431.4 1134.40,435.4 1138.15,431.4 1141.90,435.4 1145.65,431.4 1149.40,435.4 1153.15,431.4 1156.90,435.4 1160.65,431.4 1164.40,435.4 1168.15,431.4 1171.90,435.4 1175.65,431.4 1179.40,435.4 1183.15,431.4 1186.90,435.4 1190.65,431.4 1194.40,435.4 1198.15,431.4 1201.90,435.4 1205.65,431.4 1209.40,435.4 1213.15,431.4 1216.90,435.4 1220.65,431.4 1224.40,435.4 1228.15,431.4 1231.90,435.4 1235.65,431.4 1239.40,435.4 1243.15,431.4 1246.90,435.4 1250.65,431.4 1254.40,435.4 1258.15,431.4" fill="none" stroke="#e25a6c" stroke-width="1.800" stroke-linejoin="round" stroke-linecap="round"/></svg>
<div class="t m" style="left:1386px;top:380.81px;font-size:33.2px;line-height:66.4px;height:66.4px;letter-spacing:0.012px;color:#bcbec4"><span style="color:#2aacb8">1000</span>);</div>
<svg class="i" style="left:1866px;top:125.8px" width="20" height="20" viewBox="0 0 20 20" ><circle cx="10" cy="10" r="9.200" fill="#db5c5c"/><rect x="8.700" y="4.300" width="2.600" height="7.400" rx="1.200" fill="#1e1f22"/><circle cx="10" cy="14.700" r="1.600" fill="#1e1f22"/></svg>
<span class="t s" style="left:1889.22px;top:116.97px;font-size:19.7px;line-height:39.4px;height:39.4px;color:#bcbec4;letter-spacing:0.000px;">1</span>
<svg class="i" style="left:1910.5px;top:125.5px" width="22" height="20" viewBox="0 0 22 20" ><path d="M10.700 3.800 L17.600 16 H3.800 Z" fill="#d6ae58" stroke="#d6ae58" stroke-width="4.600" stroke-linejoin="round"/><rect x="9.500" y="5.800" width="2.400" height="6.600" rx="1" fill="#1e1f22"/><circle cx="10.700" cy="15.200" r="1.500" fill="#1e1f22"/></svg>
<span class="t s" style="left:1934.32px;top:116.97px;font-size:19.7px;line-height:39.4px;height:39.4px;color:#bcbec4;letter-spacing:0.000px;">1</span>
<svg class="i" style="left:1959.75px;top:131.25px" width="14.5" height="9.5" viewBox="0 0 14.5 9.5" ><path d="M2 7.5 L7.25 2 L12.5 7.5" fill="none" stroke="#ced0d6" stroke-width="1.5" stroke-linecap="round" stroke-linejoin="round"/></svg>
<svg class="i" style="left:1991.45px;top:131.55px" width="14.5" height="9.5" viewBox="0 0 14.5 9.5" ><path d="M2 2 L7.25 7.5 L12.5 2" fill="none" stroke="#ced0d6" stroke-width="1.5" stroke-linecap="round" stroke-linejoin="round"/></svg>
<div class="b" style="left:2003px;top:157px;width:12px;height:735.5px;background:rgba(255,255,255,0.18);"></div>
<div class="b" style="left:739px;top:932px;width:1224px;height:12px;background:rgba(255,255,255,0.18);"></div>
<div class="b" style="left:1996px;top:394.8px;width:20px;height:3.4px;background:#c85462;"></div>
<div class="b" style="left:2018px;top:54px;width:30px;height:892px;background:#2b2d30;"></div>
<div class="b" style="left:2030px;top:242.2px;width:18px;height:1px;background:#43454a;"></div>
<svg class="i" style="left:2018px;top:54px" width="30" height="892" viewBox="2018 54 30 892"><g fill="none" stroke="#ced0d6" stroke-width="2" stroke-linecap="round" stroke-linejoin="round"><path d="M2036.800 92.600 H2050 M2036.800 92.600 C2039.800 89.500 2041.200 87.500 2041.200 84 V80.500 C2041.200 75.800 2044.500 72.900 2050 72.900 M2044.600 96.400 Q2046.500 98.800 2050 98.800"/><path d="M2050 134.800 C2041 134.800 2037.200 139.500 2037.200 146 C2037.200 152.500 2041.500 157 2050 157"/><path d="M2050 139.800 C2045 139.800 2042.400 142.300 2042.400 146.200 C2042.400 150 2045 152.600 2050 152.600"/><path d="M2050 144 C2047.500 144 2046.600 145 2046.600 146.400 C2046.600 147.800 2047.600 148.800 2050 148.800"/><path d="M2050 192.400 C2041 192.400 2037.200 194 2037.200 196.400 V213 C2037.200 215.400 2041 216.900 2050 216.900 M2037.200 202 C2037.200 204.300 2041 205.800 2050 205.800 M2037.200 207.500 C2037.200 209.800 2041 211.300 2050 211.300"/><rect x="2037.100" y="270.200" width="8.300" height="8.200" rx="1.800"/><rect x="2037.100" y="283.800" width="8.300" height="8.200" rx="1.800"/></g></svg>
</body></html>
